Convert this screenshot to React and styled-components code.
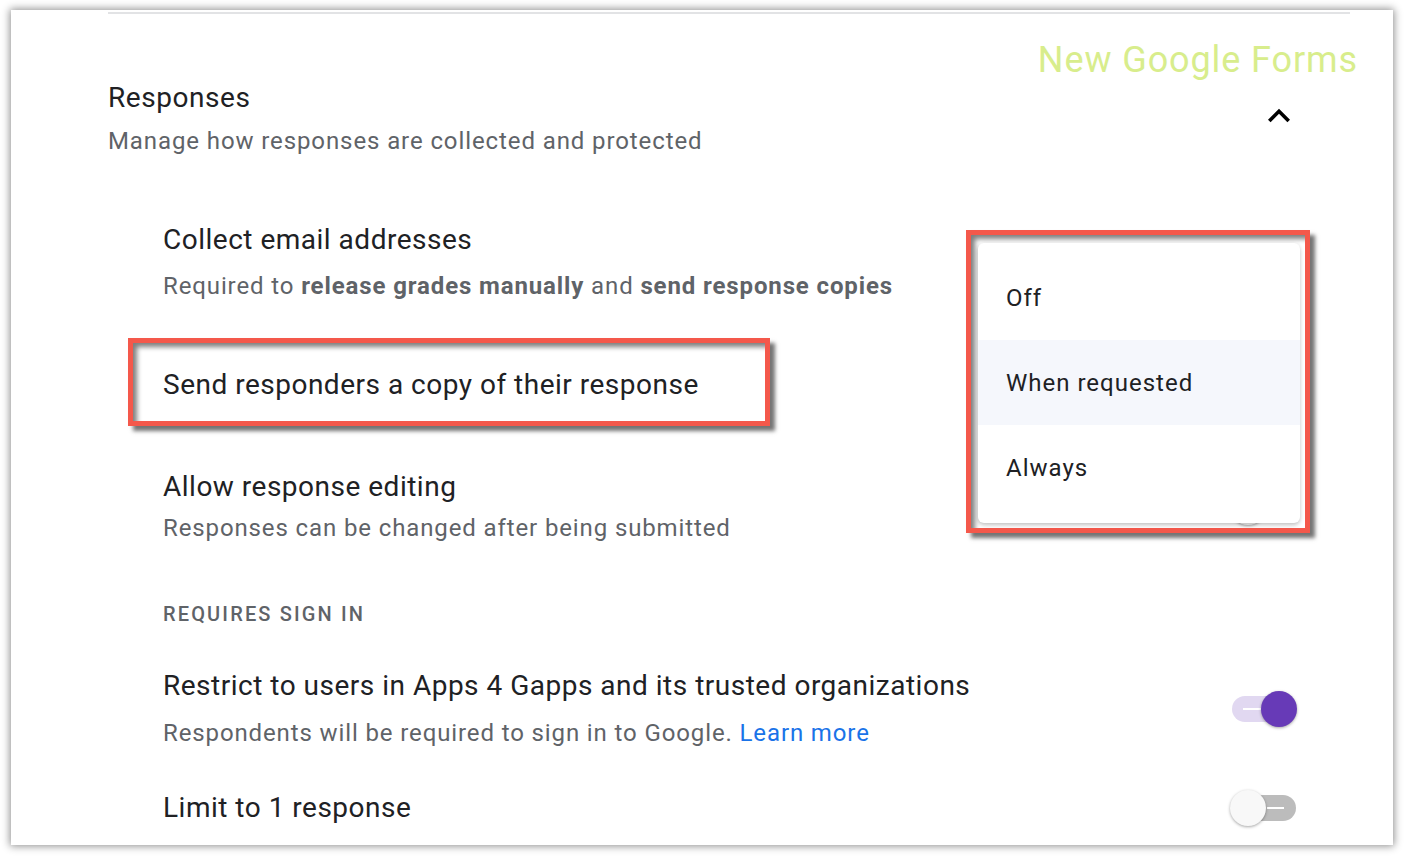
import React from 'react';
import styled, { createGlobalStyle, css } from 'styled-components';

const GlobalStyle = createGlobalStyle`
  html, body {
    margin: 0;
    padding: 0;
    background: #fff;
  }
  body {
    font-family: Roboto, "Noto Sans", Arial, sans-serif;
    color: #202124;
  }
  * {
    box-sizing: border-box;
  }
`;

// red call-out used around the copy row and the open menu
const annotated = css`
  border: 5px solid #f4584b;
  box-shadow: 5px 5px 4px rgba(0, 0, 0, 0.55), inset 5px 5px 5px -1px rgba(0, 0, 0, 0.5);
`;

const Page = styled.div`
  padding: 10px 11px 11px 11px;
`;

const Frame = styled.div`
  position: relative;
  width: 1382px;
  height: 835px;
  background: #fff;
  box-shadow: 0 0 8px 1px rgba(0, 0, 0, 0.45);
  overflow: hidden;
  padding: 2px 35px 0 97px;
`;

const Rule = styled.div`
  border-top: 2px solid #e2e3e5;
  margin-right: 8px;
`;

const Header = styled.header`
  display: flex;
  justify-content: space-between;
  align-items: flex-start;
`;

const HeaderText = styled.div`
  padding-top: 66px;
`;

const SectionTitle = styled.h2`
  margin: 0;
  font-size: 28px;
  line-height: 36px;
  font-weight: 400;
  letter-spacing: 0.55px;
  color: #202124;
`;

const SectionSub = styled.p`
  margin: 9px 0 0;
  font-size: 24px;
  line-height: 32px;
  letter-spacing: 0.9px;
  color: #5f6368;
`;

const HeaderAside = styled.div`
  display: flex;
  flex-direction: column;
  align-items: flex-end;
  padding-top: 24px;
`;

const Watermark = styled.div`
  font-size: 36px;
  line-height: 44px;
  letter-spacing: 0.9px;
  color: #d8ed8c;
`;

const Collapse = styled.button`
  margin: 12px 57px 0 0;
  width: 44px;
  height: 44px;
  padding: 0;
  border: 0;
  background: none;
  color: #000;
`;

const SettingsList = styled.div`
  margin: 0 61px 0 55px;
`;

const SettingRow = styled.div`
  display: flex;
  align-items: center;
  justify-content: space-between;
  margin-top: ${(p) => p.$mt}px;
`;

const SettingTitle = styled.div`
  font-size: 28px;
  line-height: 36px;
  letter-spacing: 0.5px;
  color: #202124;
`;

const SettingDesc = styled.div`
  margin-top: ${(p) => p.$gap}px;
  font-size: 24px;
  line-height: 32px;
  letter-spacing: 0.88px;
  color: #5f6368;

  b {
    font-weight: 700;
  }
`;

const HighlightRow = styled.div`
  width: 642px;
  margin: 36px 0 0 -35px;
  padding: 24px 0 18px 30px;
  ${annotated}
`;

const GroupLabel = styled.div`
  margin-top: 56px;
  font-size: 20px;
  line-height: 28px;
  font-weight: 500;
  letter-spacing: 2.15px;
  color: #5f6368;
  text-transform: uppercase;
`;

const LearnMore = styled.a`
  color: #1a73e8;
  text-decoration: none;
`;

const Switch = styled.div`
  position: relative;
  width: 66px;
  height: 36px;
  flex-shrink: 0;
`;

const Track = styled.div`
  position: absolute;
  left: 1px;
  top: 5px;
  width: 64px;
  height: 26px;
  border-radius: 13px;
  background: ${(p) => (p.$on ? '#e1d8f1' : '#bcbcbc')};
`;

const TrackMark = styled.div`
  position: absolute;
  top: 12px;
  height: 2px;
  width: ${(p) => (p.$on ? 20 : 17)}px;
  left: ${(p) => (p.$on ? 11 : 35)}px;
  background: #fff;
`;

const Knob = styled.div`
  position: absolute;
  top: 0;
  left: ${(p) => (p.$on ? 30 : -1)}px;
  width: 36px;
  height: 36px;
  border-radius: 50%;
  background: ${(p) => (p.$on ? '#673ab7' : '#f8f8f8')};
  box-shadow: 0 1px 3px rgba(0, 0, 0, 0.35);
`;

const MenuFrame = styled.div`
  position: absolute;
  left: 955px;
  top: 220px;
  width: 344px;
  height: 303px;
  padding: 8px 5px 5px 7px;
  ${annotated}
`;

const Menu = styled.ul`
  list-style: none;
  margin: 0;
  height: 100%;
  padding: 12px 0 13px;
  background: #fff;
  border-radius: 6px;
  box-shadow: 0 2px 4px rgba(0, 0, 0, 0.25);
`;

const MenuItem = styled.li`
  height: 85px;
  display: flex;
  align-items: center;
  padding-left: 28px;
  font-size: 24px;
  letter-spacing: 1px;
  color: #202124;
  background: ${(p) => (p.$active ? '#f5f7fc' : 'transparent')};
`;

const Toggle = ({ on }) => (
  <Switch>
    <Track $on={on}>
      <TrackMark $on={on} />
    </Track>
    <Knob $on={on} />
  </Switch>
);

const ChevronUp = () => (
  <svg width="44" height="44" viewBox="0 0 24 24" fill="currentColor">
    <path d="M12 8l-6 6 1.41 1.41L12 10.83l4.59 4.58L18 14z" />
  </svg>
);

const options = ['Off', 'When requested', 'Always'];

export default function App() {
  return (
    <Page>
      <GlobalStyle />
      <Frame>
        <Rule />
        <Header>
          <HeaderText>
            <SectionTitle>Responses</SectionTitle>
            <SectionSub>Manage how responses are collected and protected</SectionSub>
          </HeaderText>
          <HeaderAside>
            <Watermark>New Google Forms</Watermark>
            <Collapse aria-label="Collapse">
              <ChevronUp />
            </Collapse>
          </HeaderAside>
        </Header>

        <SettingsList>
          <SettingRow $mt={65}>
            <div>
              <SettingTitle>Collect email addresses</SettingTitle>
              <SettingDesc $gap={12}>
                Required to <b>release grades manually</b> and <b>send response copies</b>
              </SettingDesc>
            </div>
          </SettingRow>

          <HighlightRow>
            <SettingTitle>Send responders a copy of their response</SettingTitle>
          </HighlightRow>

          <SettingRow $mt={43}>
            <div>
              <SettingTitle>Allow response editing</SettingTitle>
              <SettingDesc $gap={7}>Responses can be changed after being submitted</SettingDesc>
            </div>
            <Toggle on={false} />
          </SettingRow>

          <GroupLabel>Requires sign in</GroupLabel>

          <SettingRow $mt={40}>
            <div>
              <SettingTitle>Restrict to users in Apps 4 Gapps and its trusted organizations</SettingTitle>
              <SettingDesc $gap={13}>
                Respondents will be required to sign in to Google. <LearnMore href="#">Learn more</LearnMore>
              </SettingDesc>
            </div>
            <Toggle on />
          </SettingRow>

          <SettingRow $mt={41}>
            <SettingTitle>Limit to 1 response</SettingTitle>
            <Toggle on={false} />
          </SettingRow>
        </SettingsList>

        <MenuFrame>
          <Menu>
            {options.map((o) => (
              <MenuItem key={o} $active={o === 'When requested'}>
                {o}
              </MenuItem>
            ))}
          </Menu>
        </MenuFrame>
      </Frame>
    </Page>
  );
}
